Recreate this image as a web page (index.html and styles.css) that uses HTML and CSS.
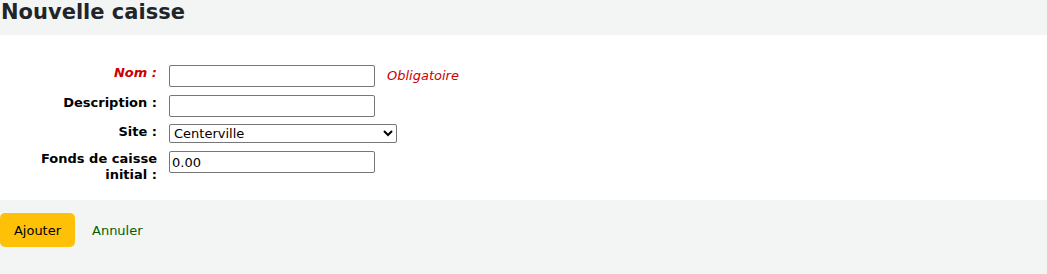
FILE: index.html
```html
<!DOCTYPE html>
<html lang="fr">
<head>
<meta charset="utf-8">
<title>Nouvelle caisse</title>
<link rel="stylesheet" href="styles.css">
</head>
<body>
<h1 class="page-title">Nouvelle caisse</h1>
<form class="register-form">
  <fieldset class="rows">
    <ol class="field-list">
      <li class="field-row">
        <label class="field-label required" for="name">Nom :</label>
        <input class="text-input" type="text" id="name">
        <span class="required-note">Obligatoire</span>
      </li>
      <li class="field-row">
        <label class="field-label" for="description">Description :</label>
        <input class="text-input" type="text" id="description">
      </li>
      <li class="field-row row-site">
        <label class="field-label" for="branch">Site :</label>
        <select class="select-input" id="branch">
          <option>Centerville</option>
        </select>
      </li>
      <li class="field-row">
        <label class="field-label" for="float">Fonds de caisse initial :</label>
        <input class="text-input" type="text" id="float" value="0.00">
      </li>
    </ol>
  </fieldset>
  <fieldset class="action">
    <button type="submit" class="btn-primary">Ajouter</button>
    <a class="cancel-link" href="#">Annuler</a>
  </fieldset>
</form>
</body>
</html>
```
FILE: styles.css
```css
html, body {
  margin: 0;
  padding: 0;
}

body {
  background: #f3f4f4;
  font-family: "DejaVu Sans", sans-serif;
  color: #000;
}

.page-title {
  margin: 0;
  height: 35px;
  padding: 0 0 0 1px;
  box-sizing: border-box;
  font-size: 21px;
  line-height: 24px;
  font-weight: bold;
  color: #212529;
}

.register-form {
  margin: 0;
}

.rows {
  margin: 0;
  border: 0;
  background: #fff;
  height: 165px;
  box-sizing: border-box;
  padding: 30px 0 0 0;
}

.field-list {
  list-style: none;
  margin: 0;
  padding: 0;
  display: flex;
  flex-direction: column;
  gap: 8px;
}

.field-row {
  display: flex;
  align-items: flex-start;
}

.row-site {
  margin-top: -1px;
}

.field-label {
  width: 157px;
  flex: none;
  margin-right: 12px;
  text-align: right;
  font-size: 13px;
  line-height: 16px;
  font-weight: bold;
  color: #000;
}

.field-label.required {
  color: #cc0000;
  font-style: italic;
}

.text-input {
  width: 206px;
  height: 22px;
  box-sizing: border-box;
  margin: 0;
  padding: 1px 2px;
  border: 1px solid #767676;
  border-radius: 2px;
  font-family: "DejaVu Sans", sans-serif;
  font-size: 13px;
  background: #fff;
}

.select-input {
  width: 228px;
  height: 19px;
  box-sizing: border-box;
  margin: 0;
  font-family: "DejaVu Sans", sans-serif;
  font-size: 13px;
  border: 1px solid #767676;
  border-radius: 2px;
  background: #fff;
  color: #000;
}

.required-note {
  margin-left: 12px;
  font-size: 13px;
  line-height: 22px;
  font-style: italic;
  color: #cc0000;
}

.action {
  margin: 0;
  border: 0;
  padding: 13px 0 0 0;
  display: flex;
  align-items: center;
  gap: 17px;
}

.btn-primary {
  width: 75px;
  height: 34px;
  margin: 0;
  border: 0;
  border-radius: 5px;
  background: #ffc107;
  color: #000;
  font-family: "DejaVu Sans", sans-serif;
  font-size: 13px;
  padding: 0;
}

.cancel-link {
  color: #006100;
  text-decoration: none;
  font-size: 13px;
}
```
